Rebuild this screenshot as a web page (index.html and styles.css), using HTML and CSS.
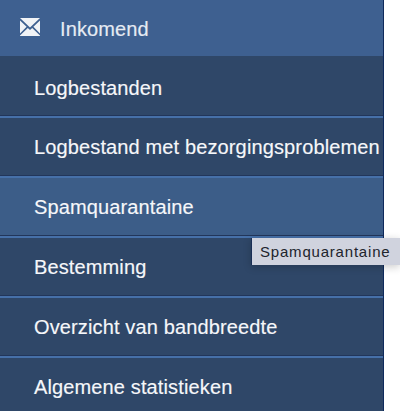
FILE: index.html
```html
<!DOCTYPE html>
<html lang="nl">
<head>
<meta charset="utf-8">
<title>Inkomend</title>
<link rel="stylesheet" href="styles.css">
</head>
<body>
<nav class="sidebar">
  <div class="header">
    <svg class="icon" viewBox="0 0 20 18" width="20" height="18" aria-hidden="true">
      <path d="M0 0H20L10 9.5Z M0 2.5V15.5L6.6 8.8Z M20 2.5V15.5L13.4 8.8Z M0 18V17.5L7.8 10L10 12L12.2 10L20 17.5V18Z" fill="#f1f3f6"/>
    </svg>
    <span class="header-label">Inkomend</span>
  </div>
  <ul class="menu">
    <li class="item">Logbestanden</li>
    <li class="item">Logbestand met bezorgingsproblemen</li>
    <li class="item active">Spamquarantaine</li>
    <li class="item">Bestemming</li>
    <li class="item">Overzicht van bandbreedte</li>
    <li class="item">Algemene statistieken</li>
  </ul>
</nav>
<div class="tooltip">Spamquarantaine</div>
</body>
</html>
```
FILE: styles.css
```css
html, body {
  margin: 0;
  padding: 0;
  height: 100%;
  background: #fff;
  overflow: hidden;
}
body {
  position: relative;
  font-family: "Liberation Sans", Arial, sans-serif;
}
.sidebar {
  width: 383px;
  height: 411px;
  border-right: 1px solid #0f2a5c;
  background: #2f4768;
  color: #f6f7fa;
  font-size: 20px;
  letter-spacing: 0.13px;
  -webkit-text-stroke: 0.15px currentColor;
  overflow: hidden;
}
.header {
  box-sizing: border-box;
  display: flex;
  align-items: center;
  height: 56px;
  padding: 2px 0 0 20px;
  background: #3e6090;
  color: #e6ebf3;
}
.icon {
  margin-top: -4px;
  flex: none;
}
.header-label {
  margin-left: 20px;
}
.menu {
  list-style: none;
  margin: 0;
  padding: 0;
}
.item {
  box-sizing: border-box;
  display: flex;
  align-items: center;
  height: 60px;
  padding-left: 34px;
  white-space: nowrap;
  border-bottom: 2px solid #4670a8;
  box-shadow: inset 0 -1px 0 #22365a;
}
.item:first-child {
  height: 62px;
  padding-top: 4px;
}
.item.active {
  background: #3c5d88;
}
.tooltip {
  position: absolute;
  left: 251px;
  top: 238px;
  width: 149px;
  height: 27px;
  box-sizing: border-box;
  padding-left: 8px;
  line-height: 27px;
  font-size: 15px;
  letter-spacing: 0.8px;
  color: #20242c;
  background: #d0d3de;
  border-left: 1px solid #1b2f55;
  box-shadow: 0 2px 8px rgba(0, 0, 0, 0.2);
  white-space: nowrap;
}
```
